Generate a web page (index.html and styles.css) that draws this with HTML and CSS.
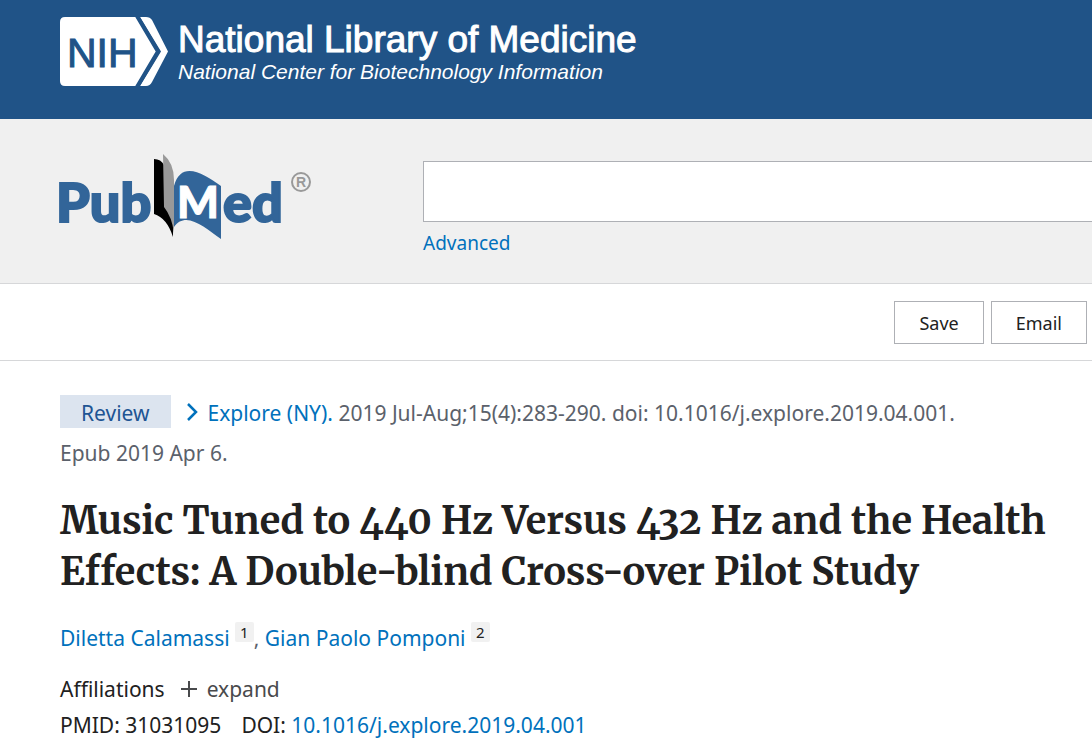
FILE: index.html
```html
<!DOCTYPE html>
<html lang="en">
    <head>
        <title>Music Tuned to 440 Hz Versus 432 Hz and the Health Effects - PubMed</title>
        <meta charset="UTF-8">
        <meta name="viewport" content="width=device-width, initial-scale=1">
        <link rel="stylesheet" href="styles.css">
    </head>
    <body>
        <header class="ncbi-header">
            <a class="ncbi-logo" href="#">
                <svg class="nih-mark" width="108" height="69" viewBox="0 0 108 69" aria-hidden="true">
                    <path fill="#fff" d="M5 0H76L97 34.500L76 69H5Q0 69 0 64V5Q0 0 5 0Z"/>
                    <path fill="#fff" d="M80 0H86Q90 0 92 3L108 34.500L92 65Q90 69 86 69H80L101 34.500Z"/>
                    <path fill="none" stroke="#205387" stroke-width="4" d="M77 -1L98 34.500L77 70"/>
                    <text class="nih-text" x="7" y="50">NIH</text>
                </svg>
                <span class="ncbi-names">
                    <span class="nlm">National Library of Medicine</span>
                    <span class="ncbi">National Center for Biotechnology Information</span>
                </span>
            </a>
        </header>

        <!-- PubMed logo and search -->
        <form class="search-header">
            <a class="pubmed-logo" href="#" aria-label="PubMed">
                <svg width="256" height="90" viewBox="0 0 256 90" aria-hidden="true">
                    <text class="logo-text" x="-4" y="69">Pub</text>
                    <path fill="#000" d="M94 6Q101 6 104 12V53L113 62V84Q107 65 94 61Z"/>
                    <path fill="#999" d="M103 1Q114 10 114 27V80Q112 64 104 54Z"/>
                    <path fill="#326599" d="M114 33C121 7 143 20 161 33V86C145 75 126 57 114 74Z"/>
                    <text class="logo-m" x="117" y="65">M</text>
                    <text class="logo-text" x="163" y="69">ed</text>
                    <circle cx="241" cy="29" r="9" fill="none" stroke="#999" stroke-width="2"/>
                    <text class="logo-r" x="236" y="34">R</text>
                </svg>
            </a>
            <div class="search-box">
                <input class="search-input" type="text" aria-label="Search PubMed">
                <a class="advanced" href="#">Advanced</a>
            </div>
        </form>

        <div class="toolbar">
            <button class="action" type="button">Save</button>
            <button class="action" type="button">Email</button>
        </div>

        <main class="article">
            <div class="citation">
                <span class="badge">Review</span>
                <svg class="chevron" width="12" height="18" viewBox="0 0 12 18" aria-hidden="true">
                    <path fill="none" stroke="#0071bc" stroke-width="2.500" d="M2 1L10 9L2 17"/>
                </svg>
                <a href="#">Explore (NY).</a>
                2019 Jul-Aug;15(4):283-290. doi: 10.1016/j.explore.2019.04.001.
                <span class="epub">Epub 2019 Apr 6.</span>
            </div>
            <h1 class="title">Music Tuned to 440 Hz Versus 432 Hz and the Health Effects: A Double-blind Cross-over Pilot Study</h1>
            <div class="authors">
                <a href="#">Diletta Calamassi</a>
                <sup class="aff">1</sup>,
                <a href="#">Gian Paolo Pomponi</a>
                <sup class="aff">2</sup>
            </div>
            <div class="affiliations">
                <span>Affiliations</span>
                <button class="expand" type="button">
                    <svg width="16" height="16" viewBox="0 0 16 16" aria-hidden="true">
                        <path stroke="#494a4c" stroke-width="2" d="M8 0V16M0 8H16"/>
                    </svg>
                    expand
                </button>
            </div>
            <div class="identifiers">
                <span>PMID: 31031095</span>
                <span>DOI: <a href="#">10.1016/j.explore.2019.04.001</a></span>
            </div>
        </main>
    </body>
</html>
```
FILE: styles.css
```css
* {
    box-sizing: border-box;
}
body {
    margin: 0;
    background-color: #fff;
    color: #212121;
    font-family: "Segoe UI", "Noto Sans", sans-serif;
    font-size: 21px;
    line-height: 36px;
}
a {
    color: #0071bc;
    text-decoration: none;
}
button {
    font-family: inherit;
    color: #212121;
    cursor: pointer;
}

/* blue bar */
.ncbi-header {
    padding: 17px 60px 33px;
    background-color: #205387;
}
.ncbi-logo {
    display: flex;
    gap: 10px;
    color: #fff;
    font-family: "Liberation Sans", Arial, sans-serif;
}
.nih-mark {
    flex: none;
}
.nih-text {
    font-size: 41px;
    fill: #205387;
    stroke: #205387;
    stroke-width: 1px;
}
.ncbi-names {
    display: flex;
    flex-direction: column;
    padding-top: 3px;
}
.nlm {
    font-size: 37px;
    line-height: 40px;
    -webkit-text-stroke: 1px #fff;
}
.ncbi {
    font-size: 21px;
    font-style: italic;
    line-height: 24px;
}

/* search */
.search-header {
    display: flex;
    gap: 107px;
    padding: 34px 0 22px 60px;
    background-color: #f0f0f0;
    border-bottom: 1px solid #d6d7d9;
}
.pubmed-logo {
    flex: none;
}
.pubmed-logo svg {
    display: block;
    overflow: visible;
}
.logo-text {
    font-family: Lato, sans-serif;
    font-size: 54px;
    font-weight: 900;
    fill: #326599;
    stroke: #326599;
    stroke-width: 2px;
}
.logo-m {
    font-family: Lato, sans-serif;
    font-size: 44px;
    font-weight: 900;
    fill: #fff;
    stroke: #fff;
    stroke-width: 1px;
}
.logo-r {
    font-family: "Liberation Sans", sans-serif;
    font-size: 14px;
    font-weight: bold;
    fill: #999;
}
.search-box {
    flex: 1;
    padding-top: 8px;
}
.search-input {
    display: block;
    width: 100%;
    height: 61px;
    padding: 0 16px;
    border: 1px solid #aeb0b5;
    border-right: 0;
    border-radius: 0;
    background-color: #fff;
    font: inherit;
}
.advanced {
    display: block;
    padding-top: 3px;
    font-size: 19px;
}

/* save / email */
.toolbar {
    display: flex;
    justify-content: flex-end;
    gap: 7px;
    padding: 17px 5px 16px;
    border-bottom: 1px solid #d6d7d9;
}
.action {
    height: 43px;
    padding: 0 24px;
    border: 1px solid #aeb0b5;
    background-color: #fff;
    font-size: 18px;
}

/* article */
.article {
    padding: 32px 40px 0 60px;
}
.citation {
    color: #5b616b;
    line-height: 40px;
}
.badge {
    display: inline-block;
    margin-right: 10px;
    padding: 3px 21px 0;
    background-color: #dce4ef;
    color: #205493;
    line-height: 30px;
}
.chevron {
    margin-right: 4px;
}
.epub {
    white-space: nowrap;
}
.title {
    margin: 22px 0 0;
    font-family: Merriweather, "Liberation Serif", serif;
    font-size: 38px;
    font-variant-numeric: oldstyle-nums;
    font-weight: bold;
    line-height: 51px;
}
.authors {
    margin-top: 23px;
    color: #5b616b;
}
.aff {
    display: inline-block;
    padding: 0 5px;
    border-radius: 2px;
    background-color: #f1f1f1;
    color: #212121;
    font-size: 15px;
    line-height: 20px;
    vertical-align: 8px;
}
.affiliations {
    display: flex;
    gap: 16px;
    margin-top: 15px;
}
.expand {
    display: flex;
    align-items: center;
    gap: 10px;
    padding: 0;
    border: 0;
    background: none;
    color: #494a4c;
    font-size: 21px;
}
.identifiers {
    display: flex;
    gap: 20px;
}
```
